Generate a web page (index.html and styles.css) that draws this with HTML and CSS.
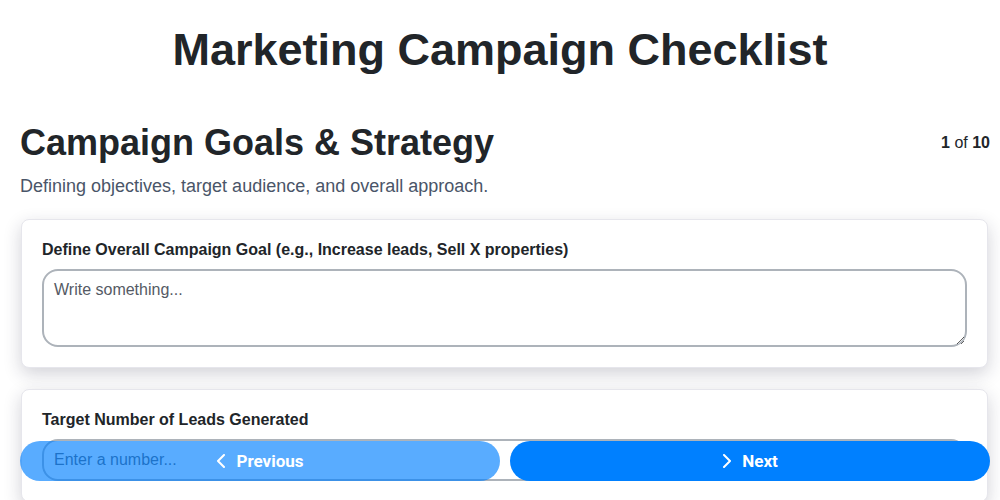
FILE: index.html
```html
<!DOCTYPE html>
<html lang="en">
<head>
<meta charset="utf-8">
<title>Marketing Campaign Checklist</title>
<link rel="stylesheet" href="styles.css">
</head>
<body>
<main class="page">
  <h1 class="title">Marketing Campaign Checklist</h1>
  <section class="step">
    <header class="step-head">
      <h2 class="step-title">Campaign Goals &amp; Strategy</h2>
      <div class="counter"><b>1</b> of <b>10</b></div>
    </header>
    <p class="step-desc">Defining objectives, target audience, and overall approach.</p>
    <div class="card">
      <label class="field-label" for="goal">Define Overall Campaign Goal (e.g., Increase leads, Sell X properties)</label>
      <textarea id="goal" class="textarea" placeholder="Write something..."></textarea>
    </div>
    <div class="card">
      <label class="field-label" for="leads">Target Number of Leads Generated</label>
      <input id="leads" class="input" type="text" placeholder="Enter a number...">
    </div>
  </section>
</main>
<nav class="footer">
  <button class="btn btn-prev" type="button" disabled>
    <svg class="chev" viewBox="0 0 10 14" width="10" height="14"><path d="M8 1L2 7l6 6" fill="none" stroke="currentColor" stroke-width="2" stroke-linecap="round" stroke-linejoin="round"/></svg>
    <span>Previous</span>
  </button>
  <button class="btn btn-next" type="button">
    <svg class="chev" viewBox="0 0 10 14" width="10" height="14"><path d="M2 1l6 6-6 6" fill="none" stroke="currentColor" stroke-width="2" stroke-linecap="round" stroke-linejoin="round"/></svg>
    <span>Next</span>
  </button>
</nav>
</body>
</html>
```
FILE: styles.css
```css
html, body {
  margin: 0;
  padding: 0;
  background: #ffffff;
}
body {
  font-family: "Liberation Sans", Arial, sans-serif;
  color: #212529;
}
.page {
  padding: 0 10px 0 20px;
}
.title {
  margin: 0;
  padding-top: 24px;
  padding-right: 10px;
  font-size: 45px;
  line-height: 52px;
  font-weight: 700;
  text-align: center;
  color: #212529;
}
.step {
  margin-top: 45px;
}
.step-head {
  display: flex;
  justify-content: space-between;
  align-items: center;
}
.step-title {
  margin: 0;
  font-size: 36px;
  line-height: 44px;
  font-weight: 700;
  color: #212529;
}
.counter {
  font-size: 16px;
  color: #212529;
}
.step-desc {
  margin: 9px 0 21px;
  font-size: 18px;
  line-height: 24px;
  color: #4a5568;
}
.card {
  margin: 0 2px 21px 1px;
  padding: 20px;
  border: 1px solid #e6e6ec;
  border-radius: 8px;
  background: #ffffff;
  box-shadow: 0 6px 18px rgba(30, 30, 60, 0.2);
  display: flex;
  flex-direction: column;
}
.field-label {
  font-size: 16px;
  line-height: 20px;
  font-weight: 700;
  color: #212529;
  margin-bottom: 9px;
}
.textarea, .input {
  font-family: "Liberation Sans", Arial, sans-serif;
  font-size: 16px;
  color: #212529;
  border: 2px solid #adb3ba;
  border-radius: 16px;
  padding: 9px 10px;
  background: #ffffff;
  box-sizing: border-box;
  width: 100%;
  outline: none;
}
.textarea {
  height: 78px;
  padding-top: 10px;
  resize: vertical;
}
.input {
  height: 42px;
}
.textarea::placeholder, .input::placeholder {
  color: #555a64;
  opacity: 1;
}
.footer {
  position: fixed;
  left: 20px;
  right: 10px;
  bottom: 19px;
  display: flex;
  gap: 10px;
}
.btn {
  flex: 1;
  height: 40px;
  border: none;
  border-radius: 20px;
  background: #0080ff;
  color: #ffffff;
  font-family: Roboto, "Liberation Sans", sans-serif;
  font-size: 17px;
  font-weight: 700;
  display: flex;
  align-items: center;
  justify-content: center;
  gap: 10px;
  cursor: pointer;
}
.btn-prev {
  opacity: 0.65;
}
.chev {
  display: block;
}
```
